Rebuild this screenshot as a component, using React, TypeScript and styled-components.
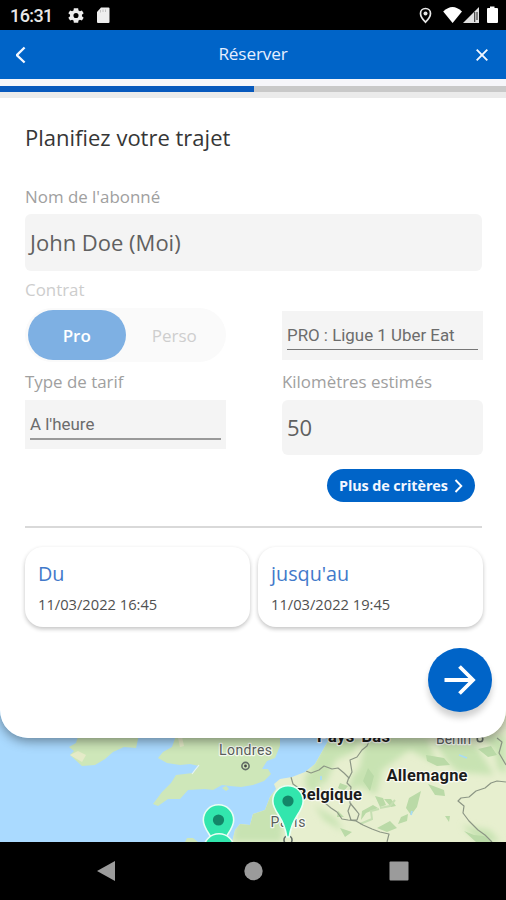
import React from "react";
import styled, { createGlobalStyle } from "styled-components";

const BLUE = "#0064c8";

const GlobalStyle = createGlobalStyle`
  * { box-sizing: border-box; }
  body { margin: 0; background: #000; }
`;

const Screen = styled.div`
  width: 506px;
  height: 900px;
  display: flex;
  flex-direction: column;
  overflow: hidden;
  font-family: "Open Sans", "Noto Sans", sans-serif;
`;

const StatusBar = styled.div`
  height: 30px;
  flex: none;
  padding: 0 7px 0 10px;
  display: flex;
  align-items: center;
  justify-content: space-between;
  background: #000;
`;

const StatusGroup = styled.div`
  display: flex;
  align-items: center;
`;

const Clock = styled.span`
  width: 58px;
  padding-top: 2px;
  font: 500 18px/22px Roboto, sans-serif;
  letter-spacing: -0.6px;
  color: #e8e8e8;
`;

const Header = styled.header`
  height: 49px;
  flex: none;
  display: grid;
  grid-template-columns: 48px 1fr 48px;
  align-items: center;
  justify-items: center;
  background: ${BLUE};
`;

const HeaderTitle = styled.h1`
  margin: 0 0 2px;
  font-size: 17.2px;
  line-height: 24px;
  letter-spacing: -0.15px;
  font-weight: 400;
  color: #e6efff;
`;

const IconButton = styled.button`
  display: flex;
  padding: 0;
  border: 0;
  background: none;
`;

const Sheet = styled.main`
  height: 708px;
  flex: none;
  position: relative;
  z-index: 1;
  background: #fff;
  border-radius: 0 0 28px 28px;
  overflow: hidden;
`;

const SheetShadow = styled.div`
  flex: none;
  position: relative;
  z-index: 1;
  border-radius: 0 0 28px 28px;
  box-shadow: 0 3px 12px rgba(0, 0, 0, 0.42);
`;

const ProgressStrip = styled.div`
  height: 19px;
  padding: 7px 0 6px;
  background: linear-gradient(#f6f6fa 0 7px, #ebebeb 7px);
`;

const ProgressTrack = styled.div`
  height: 6px;
  background: #c9c9c9;
`;

const ProgressFill = styled.div`
  width: 50.2%;
  height: 100%;
  background: #0759bd;
`;

const Form = styled.div`
  padding: 24px 24px 0 25px;
  display: flex;
  flex-direction: column;
`;

const FormTitle = styled.h2`
  margin: 0 0 34px;
  font-size: 22px;
  line-height: 30px;
  font-weight: 400;
  color: #363636;
`;

const Label = styled.label<{ $faded?: boolean }>`
  font-size: 16.9px;
  line-height: 22px;
  color: ${(p) => (p.$faded ? "#cdcdcd" : "#a0a0a0")};
`;

const Field = styled.div<{ $height: number }>`
  height: ${(p) => p.$height}px;
  padding: 0 5px 2px;
  display: flex;
  align-items: center;
  border-radius: 6px;
  background: #f4f4f4;
  font-size: 22px;
  line-height: 30px;
  color: #606060;
`;

const NameField = styled(Field)`
  margin: 6px 0 7px;
`;

const Columns = styled.div`
  margin-right: -1px;
  display: grid;
  grid-template-columns: 201px 201px;
  justify-content: space-between;
`;

const ContractRow = styled(Columns)`
  margin-top: 7px;
  height: 54px;
  align-items: center;
`;

const LabelRow = styled(Columns)`
  margin-top: 9px;
  margin-bottom: 7px;
`;

const FareRow = styled(Columns)`
  align-items: start;
`;

const ContractLabel = styled(Label)`
  padding-top: 1px;
  line-height: 22px;
`;

const Toggle = styled.div`
  height: 54px;
  padding: 2px 3px;
  display: flex;
  border-radius: 27px;
  background: #fafafa;
`;

const ToggleOption = styled.button<{ $active?: boolean }>`
  flex: 1;
  padding: 2px 0 0;
  border: 0;
  border-radius: 25px;
  background: ${(p) => (p.$active ? "#7eb0e3" : "transparent")};
  color: ${(p) => (p.$active ? "#fff" : "#cecece")};
  font: ${(p) => (p.$active ? 600 : 400)} 17px/24px "Open Sans", sans-serif;
`;

const Select = styled.div<{ $line: string }>`
  height: 49px;
  padding: 12px 5px 0;
  background: #f4f4f4;
  color: #6c6c6c;
  font: 400 16.9px/24px Roboto, sans-serif;

  &::after {
    content: "";
    display: block;
    height: 1.5px;
    margin-top: 2px;
    background: ${(p) => p.$line};
  }
`;

const MoreButton = styled.button`
  align-self: flex-end;
  width: 148px;
  height: 33px;
  margin: 14px 7px 24px 0;
  padding: 1px 0 0 12px;
  display: flex;
  align-items: center;
  gap: 6px;
  border: 0;
  border-radius: 17px;
  background: ${BLUE};
  color: #f3f7ff;
  font: 700 14.4px/20px "Open Sans", sans-serif;
  letter-spacing: -0.1px;
  white-space: nowrap;
`;

const Divider = styled.hr`
  width: 100%;
  height: 2px;
  margin: 0 0 19px;
  border: 0;
  background: #d9d9d9;
`;

const DateCards = styled.div`
  margin-right: -1px;
  display: grid;
  grid-template-columns: 1fr 1fr;
  gap: 8px;
`;

const DateCard = styled.div`
  height: 80px;
  padding: 13px 13px 0;
  border-radius: 18px;
  background: #fff;
  box-shadow: 0 2px 4px rgba(0, 0, 0, 0.24);
`;

const DateLabel = styled.div`
  margin-bottom: 6px;
  font-size: 19.8px;
  line-height: 28px;
  color: #4279ca;
`;

const DateValue = styled.div`
  font-size: 14.7px;
  line-height: 20px;
  color: #505050;
`;

const NextButton = styled.button`
  align-self: flex-end;
  width: 64px;
  height: 64px;
  margin: 21px -10px 0 0;
  padding: 0;
  display: flex;
  align-items: center;
  justify-content: center;
  border: 0;
  border-radius: 50%;
  background: ${BLUE};
  box-shadow: 0 6px 6px rgba(0, 0, 0, 0.18);
`;

const MapArea = styled.div`
  height: 142px;
  flex: none;
  margin-top: -38px;

  svg { display: block; }
`;

const NavBar = styled.nav`
  height: 58px;
  flex: none;
  display: grid;
  grid-template-columns: repeat(3, 146px);
  justify-content: center;
  align-items: center;
  justify-items: center;
  background: #000;
`;

const Pin = ({ x, y }: { x: number; y: number }) => (
  <g transform={`translate(${x} ${y})`}>
    <path
      d="M0-15.2C8.500-15.200 15.200-8.500 15.200 0C15.200 5 12.500 9.500 9.500 14C5 21 2.500 27 1.200 36H-1.200C-2.500 27-5 21-9.500 14C-12.500 9.500-15.200 5-15.200 0C-15.200-8.500-8.500-15.200 0-15.200Z"
      fill="#32e6ad"
      stroke="#e9fff4"
      strokeWidth="1.600"
    />
    <circle r="5.600" fill="#138668" />
  </g>
);

const MapView = () => (
  <svg width="506" height="142" viewBox="0 700 506 142">
    <defs>
      <filter id="soft"><feGaussianBlur stdDeviation="0.7" /></filter>
      <filter id="wash"><feGaussianBlur stdDeviation="3" /></filter>
      <clipPath id="continent">
        <path d="M331 736L323 750 315 764 305 772 292 777 280 779 274 784 276 789 270 797 265 810 253 814 250 825 240 824 235 830 232 842H506V700H331Z" />
      </clipPath>
    </defs>
    <rect y="700" width="506" height="142" fill="#aadaff" />
    <g filter="url(#soft)">
      <path fill="#cee7b9" d="M80 730L76 743 69 747 74 751 70 755 82 766 95 765 105 759 113 752 124 747 136 748 140 730Z" />
      <path fill="#e5ebc8" d="M70 755L78 751 86 755 82 762Z" />
      <path fill="#cee7b9" d="M178 730L172 747 163 752 158 758 167 763 180 765 190 764 199 766 193 773 176 775 171 783 162 792 153 804 158 806 168 799 180 799 188 790 205 789 213 790 222 785 230 786 241 787 253 785 264 781 271 774 268 769 262 769 267 761 275 758 280 746 280 730Z" />
      <path fill="#e5ebc8" d="M181 732L184 746 180 747 178 738Z" />
      <path fill="#cee7b9" d="M222 788l4-2 3 3-3 2zM185 842l2-4 6 0 5 4z" />
    </g>
    <path d="M199 765L195 770 192 774" fill="none" stroke="#e9f5f1" strokeWidth="1.2" />
    <g clipPath="url(#continent)">
      <rect x="225" y="700" width="281" height="142" fill="#e7efcf" />
      <g fill="#c8e3b2" filter="url(#wash)">
        <path d="M325 732H365L354 752 336 760 325 785 308 775ZM366 735L428 738 437 765 410 750 378 773 360 766ZM232 842L236 812 258 802 272 790 284 800 282 842ZM365 762L382 773 376 795 360 786 347 792 353 775ZM434 740L476 745 494 775 458 772 447 762ZM482 736H506V774L498 769 494 750Z" />
        <path d="M314 805L335 818 344 832 324 820ZM462 825L490 830 500 842H478ZM305 774L317 777 321 793 306 789Z" />
      </g>
      <g fill="#badaa7" filter="url(#soft)">
        <path d="M426 755L444 758 450 765 437 766 427 761ZM428 784L444 790 445 796 435 795ZM409 798L421 791 417 807 411 815 406 808ZM401 817L408 814 407 821 398 824ZM445 816L450 816 449 822ZM368 768L374 776 370 791 363 781ZM375 796L383 798 386 805 380 807ZM340 783L348 786 344 791 338 788ZM478 749L491 746 497 755 488 757ZM464 831L474 835 484 836 492 842H476ZM338 811L344 817 337 817Z" />
        <path d="M362 811L373 805 378 808 366 813 361 820ZM390 821L397 828 387 832 377 828ZM340 828L352 832 345 837ZM384 799L391 799 396 806 391 807Z" />
      </g>
      <path fill="none" stroke="#c5dfb2" strokeWidth="2" d="M360 824L372 819 371 811 379 809M380 808l10-2 5-6" />
      <path stroke="#a9dcf5" strokeWidth="1.8" d="M459 755l8 3M411 815l1-4M321 776v4" />
      <g fill="none" stroke="#8c9685" strokeWidth="1.2" strokeLinejoin="round">
        <path d="M291 777L293 784 300 789 303 796 311 800M306 771L311 773 319 770 324 766 332 769 338 768 344 773 349 778 352 772 350 760 357 757 362 750 367 746 370 739" />
        <path d="M349 777L347 783 351 787 350 795 350 803 355 809 359 814 357 820 351 820 348 811 351 803M325 803L331 808 337 812 342 819 348 820 356 821 363 825 372 829 380 832 389 834 387 842" />
        <path d="M506 782L497 781 491 783 485 788 476 791 469 797 461 798 458 801 464 806 463 813 469 821 478 830 485 835 492 842M497 738L502 742 499 753 506 765" />
      </g>
    </g>
    <g fill="none" stroke="#626c66" strokeWidth="1.6">
      <circle cx="245.5" cy="766" r="3.6" />
      <circle cx="480" cy="739" r="2.8" />
      <circle cx="288" cy="840" r="4" />
    </g>
    <circle cx="245.5" cy="766" r="1.4" fill="#444" />
    <g fontFamily="Roboto, sans-serif" stroke="#fff" strokeOpacity=".8" strokeWidth="2.4" paintOrder="stroke" strokeLinejoin="round">
      <text x="219" y="755" fontSize="14" textLength="53" fill="#5a5f5c">Londres</text>
      <text x="270.5" y="827" fontSize="14" textLength="35" fill="#5a5f5c">Paris</text>
      <text x="436" y="743.5" fontSize="14" textLength="35" fill="#5a5f5c">Berlin</text>
      <g fill="#1c1c1c" fontWeight="700" fontSize="16.5">
        <text x="317" y="742" textLength="73">Pays-Bas</text>
        <text x="296" y="800" textLength="66">Belgique</text>
        <text x="386.5" y="781" textLength="81">Allemagne</text>
      </g>
    </g>
    <Pin x={218.5} y={820} />
    <Pin x={219} y={849} />
    <Pin x={288} y={801} />
  </svg>
);

const GEAR =
  "M19.4 13a7.500 7.500 0 0 0 0-2l2.200-1.700-2.200-3.700-2.600 1a8 8 0 0 0-1.700-1L14.700 3h-5.400l-.4 2.600a8 8 0 0 0-1.700 1l-2.600-1-2.200 3.700L4.600 11a7.500 7.500 0 0 0 0 2l-2.200 1.700 2.200 3.700 2.600-1a8 8 0 0 0 1.700 1l.4 2.600h5.400l.4-2.600a8 8 0 0 0 1.700-1l2.600 1 2.200-3.700zM12 15.200a3.200 3.200 0 1 1 0-6.400 3.200 3.200 0 0 1 0 6.400z";

export default function App() {
  return (
    <>
      <GlobalStyle />
      <Screen>
        <StatusBar>
          <StatusGroup>
            <Clock>16:31</Clock>
            <svg width="16" height="17" viewBox="2 2 20 20">
              <path d={GEAR} fill="#eee" fillRule="evenodd" />
            </svg>
            <svg width="26" height="18" viewBox="0 0 26 18">
              <path d="M17 1.500H24.500q1 0 1 1V16q0 1-1 1H14q-1 0-1-1V6Z" fill="#eee" />
              <path d="M16.500 4v2.500M19 3.500v2.500M21.500 3.500v2.500" stroke="#bbb" strokeWidth=".9" />
            </svg>
          </StatusGroup>
          <svg width="82" height="20" viewBox="417 5 82 20">
            <path d="M425.500 8.500C422.300 8.500 420.500 10.800 420.500 13.400C420.500 17 425.500 22.200 425.500 22.200S430.500 17 430.500 13.400C430.500 10.800 428.700 8.500 425.500 8.500Z" fill="none" stroke="#e8e8e8" strokeWidth="1.7" />
            <circle cx="425.5" cy="13.4" r="2" fill="#e8e8e8" />
            <path d="M443.2 11.5Q452.5 2.500 462 11.500L452.600 23Z" fill="#fff" />
            <path d="M463 23L479 7V23Z" fill="#e2e2e2" />
            <path d="M474.700 12V22M477 12V20" stroke="#333" strokeWidth="1.1" />
            <path d="M490 6.500h4.500v1.500H497q1 0 1 1V22q0 1-1 1h-9q-1 0-1-1V9q0-1 1-1h2Z" fill="#fff" />
          </svg>
        </StatusBar>
        <SheetShadow>
          <Sheet>
            <Header>
              <IconButton aria-label="Retour">
                <svg width="16" height="20" viewBox="0 0 16 20">
                  <path d="M8.800 2.500L1 10.200L8.800 17.500" fill="none" stroke="#f2f7ff" strokeWidth="2.300" transform="translate(-.2 0)" />
                </svg>
              </IconButton>
              <HeaderTitle>Réserver</HeaderTitle>
              <IconButton aria-label="Fermer">
                <svg width="14" height="14" viewBox="0 0 14 14">
                  <path d="M1.700 1.700L12.300 12.300M12.300 1.700L1.700 12.300" fill="none" stroke="#f2f7ff" strokeWidth="1.900" />
                </svg>
              </IconButton>
            </Header>
            <ProgressStrip>
              <ProgressTrack>
                <ProgressFill />
              </ProgressTrack>
            </ProgressStrip>
            <Form>
              <FormTitle>Planifiez votre trajet</FormTitle>
              <Label>Nom de l'abonné</Label>
              <NameField $height={57}>John Doe (Moi)</NameField>
              <ContractLabel $faded>Contrat</ContractLabel>
              <ContractRow>
                <Toggle>
                  <ToggleOption $active>Pro</ToggleOption>
                  <ToggleOption>Perso</ToggleOption>
                </Toggle>
                <Select $line="#777">PRO : Ligue 1 Uber Eat</Select>
              </ContractRow>
              <LabelRow>
                <Label>Type de tarif</Label>
                <Label>Kilomètres estimés</Label>
              </LabelRow>
              <FareRow>
                <Select $line="#999">A l'heure</Select>
                <Field $height={55}>50</Field>
              </FareRow>
              <MoreButton>
                Plus de critères
                <svg width="9" height="14" viewBox="0 0 9 14">
                  <path d="M1.500 1L7.300 7L1.500 13" fill="none" stroke="#fff" strokeWidth="1.900" />
                </svg>
              </MoreButton>
              <Divider />
              <DateCards>
                <DateCard>
                  <DateLabel>Du</DateLabel>
                  <DateValue>11/03/2022 16:45</DateValue>
                </DateCard>
                <DateCard>
                  <DateLabel>jusqu'au</DateLabel>
                  <DateValue>11/03/2022 19:45</DateValue>
                </DateCard>
              </DateCards>
              <NextButton aria-label="Suivant">
                <svg width="34" height="32" viewBox="0 0 34 32">
                  <path d="M1.500 16H30M16.500 2.500L30 16L16.500 29.500" fill="none" stroke="#fff" strokeWidth="3.800" />
                </svg>
              </NextButton>
            </Form>
          </Sheet>
        </SheetShadow>
        <MapArea>
          <MapView />
        </MapArea>
        <NavBar>
          <svg width="20" height="22" viewBox="0 0 20 22">
            <path d="M0 11L18 1V21Z" fill="#9b9b9b" />
          </svg>
          <svg width="20" height="20" viewBox="0 0 20 20">
            <circle cx="10.5" cy="10" r="9.2" fill="#9b9b9b" />
          </svg>
          <svg width="20" height="20" viewBox="0 0 20 20">
            <rect x=".5" y=".5" width="19" height="19" rx="1" fill="#9b9b9b" />
          </svg>
        </NavBar>
      </Screen>
    </>
  );
}
